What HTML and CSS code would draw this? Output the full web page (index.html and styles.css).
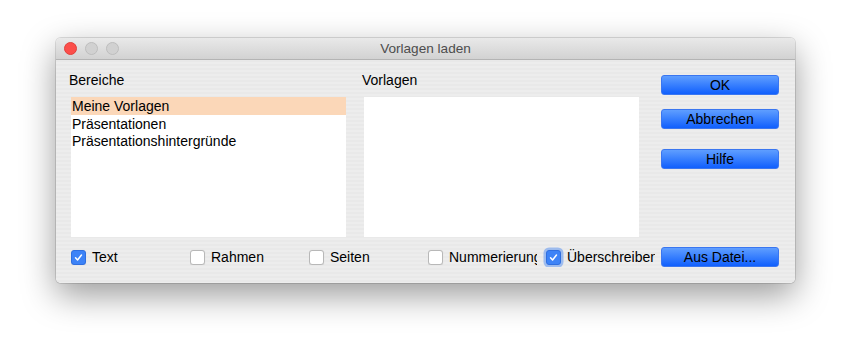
FILE: index.html
```html
<!DOCTYPE html>
<html lang="de">
<head>
    <meta charset="UTF-8">
    <title>Vorlagen laden</title>
    <link rel="stylesheet" href="styles.css">
</head>
<body>

<div class="window">

    <div class="titlebar">
        <div class="lights">
            <span class="light close"></span>
            <span class="light"></span>
            <span class="light"></span>
        </div>
        <div class="title">Vorlagen laden</div>
    </div>

    <div class="content">

        <div class="top">
            <div class="column">
                <div class="label">Bereiche</div>
                <ul class="list">
                    <li class="selected">Meine Vorlagen</li>
                    <li>Präsentationen</li>
                    <li>Präsentationshintergründe</li>
                </ul>
            </div>
            <div class="column">
                <div class="label">Vorlagen</div>
                <ul class="list"></ul>
            </div>
            <div class="buttons">
                <button class="btn">OK</button>
                <button class="btn">Abbrechen</button>
                <button class="btn help">Hilfe</button>
            </div>
        </div>

        <div class="bottom">
            <label class="check on"><span class="box"><svg viewBox="0 0 14 14"><path d="M3.8 7.2 L6 9.6 L10.2 4.4"/></svg></span><span class="text">Text</span></label>
            <label class="check"><span class="box"></span><span class="text">Rahmen</span></label>
            <label class="check"><span class="box"></span><span class="text">Seiten</span></label>
            <label class="check"><span class="box"></span><span class="text">Nummerierung</span></label>
            <label class="check on focus"><span class="box"><svg viewBox="0 0 14 14"><path d="M3.8 7.2 L6 9.6 L10.2 4.4"/></svg></span><span class="text">Überschreiben</span></label>
            <button class="btn file">Aus Datei...</button>
        </div>

    </div>
</div>

</body>
</html>
```

FILE: styles.css
```css
html {
    background: white;
}
body {
    margin:      0;
    min-height:  100vh;
    padding-top: 38px;
    box-sizing:  border-box;
    font-family: "Liberation Sans", Arial, sans-serif;
    font-size:   14px;
    color:       black;
}

.window {
    margin-left:   56px;
    width:         739px;
    height:        245px;
    border-radius: 5px;
    overflow:      hidden;
    background:    repeating-linear-gradient(#ededed 0 2px, #e9e9e9 2px 4px);
    box-shadow:    0 0 0 1px rgba(0,0,0,0.12), 0 12px 34px rgba(0,0,0,0.4);
}

/* title bar with the traffic lights */
.titlebar {
    position:      relative;
    height:        21px;
    border-bottom: 1px solid #b4b4b4;
    background:    linear-gradient(#e9e9e9, #d2d2d2);
    display:       flex;
    align-items:   center;
    justify-content: center;
}
.lights {
    position: absolute;
    left:     8px;
    top:      4px;
    display:  flex;
    gap:      8px;
}
.light {
    width:         11px;
    height:        11px;
    border-radius: 50%;
    background:    #d1d1d1;
    border:        0.5px solid #bdbdbd;
}
.light.close {
    background: #fc4e4a;
    border-color: #e0413c;
}
.title {
    color:       #4d4d4d;
    font-size:   13.6px;
    line-height: 16px;
}

.content {
    padding: 12px 16px 16px 13px;
}

.top {
    display: flex;
    height:  165px;
}
.column {
    width:        277px;
    margin-right: 16px;
}
.column + .column {
    margin-right: 22px;
}
.label {
    line-height: 16px;
}
.list {
    margin:     9px 0 0 2px;
    padding:    0;
    list-style: none;
    width:      275px;
    height:     140px;
    background: white;
}
.list li {
    height:       18px;
    line-height:  18px;
    padding-left: 1px;
    margin-bottom: -0.5px;
}
.list li.selected {
    background: #fbd7b8;
}

.buttons {
    margin-top:     3px;
    display:        flex;
    flex-direction: column;
}
.btn {
    width:         118px;
    height:        20px;
    padding:       0;
    border:        1px solid #3a76f0;
    border-radius: 3px;
    background:    linear-gradient(#5f9eff, #105ffd);
    font-family:   inherit;
    font-size:     14px;
    color:         black;
    line-height:   18px;
}
.buttons .btn + .btn {
    margin-top: 14px;
}
.buttons .btn.help {
    margin-top: 20px;
}

/* checkbox row */
.bottom {
    margin-top:  10px;
    padding-left: 2px;
    height:      20px;
    display:     flex;
    align-items: center;
}
.check {
    width:        109px;
    margin-right: 10px;
    display:      flex;
    align-items:  center;
    overflow:     hidden;
    white-space:  nowrap;
}
.check:nth-child(5) {
    margin-right: 6px;
    padding-left: 3px;
    margin-left:  -4px;
    height:       20px;
}
.box {
    flex:          none;
    width:         13px;
    height:        13px;
    border:        0.5px solid #b8b8b8;
    border-radius: 3px;
    background:    white;
    margin-right:  6px;
    box-shadow:    0 0.5px 1px rgba(0,0,0,0.1);
}
.check.on .box {
    background:   #3d83f7;
    border-color: #2f6fe0;
}
.check.focus .box {
    box-shadow: 0 0 0 2.5px rgba(95,150,240,0.55);
}
.box svg {
    display: block;
    width:   13px;
    height:  13px;
    fill:    none;
    stroke:  white;
    stroke-width: 1.6;
    stroke-linecap: round;
    stroke-linejoin: round;
}
```
